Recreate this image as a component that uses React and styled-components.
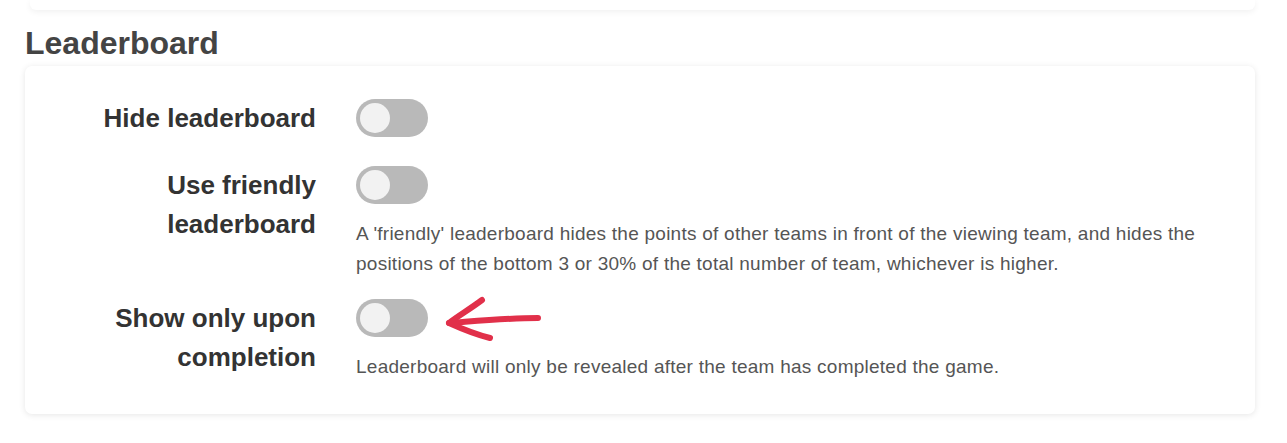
import React from "react";
import styled, { createGlobalStyle } from "styled-components";

const GlobalStyle = createGlobalStyle`
  html, body {
    margin: 0;
    padding: 0;
    background: #ffffff;
    font-family: "Liberation Sans", Arial, sans-serif;
  }
`;

const Page = styled.div`
  width: 1287px;
  height: 443px;
  overflow: hidden;
  background: #ffffff;
`;

const PrevCard = styled.div`
  margin: 0 32px 0 30px;
  height: 10px;
  background: #fff;
  border-radius: 0 0 6px 6px;
  box-shadow: 0 2px 6px rgba(0, 0, 0, 0.06);
`;

const Section = styled.section`
  padding: 0 32px 0 25px;
`;

const Heading = styled.h2`
  margin: 15px 0 5px 0;
  font-size: 32px;
  line-height: 36px;
  font-weight: bold;
  color: #444;
`;

const Card = styled.div`
  background: #fff;
  border-radius: 7px;
  box-shadow: 0 1px 6px rgba(0, 0, 0, 0.1);
  padding: 33px 0 32px 0;
`;

const Row = styled.div`
  display: grid;
  grid-template-columns: 291px 1fr;
  column-gap: 40px;
  margin-top: ${(p) => p.$gap || 0}px;
`;

const Label = styled.div`
  text-align: right;
  font-size: 26px;
  line-height: 39px;
  font-weight: bold;
  color: #333;
`;

const Control = styled.div`
  position: relative;
`;

const Toggle = styled.div`
  width: 72px;
  height: 38px;
  border-radius: 19px;
  background: #b9b9b9;
  position: relative;

  &::after {
    content: "";
    position: absolute;
    top: 4px;
    left: 4px;
    width: 30px;
    height: 30px;
    border-radius: 50%;
    background: #f2f2f2;
  }
`;

const Desc = styled.p`
  margin: 15px 0 0 0;
  max-width: 850px;
  font-size: 19px;
  letter-spacing: 0.25px;
  line-height: 30px;
  color: #555;
`;

const Arrow = styled.svg`
  position: absolute;
  left: 90px;
  top: -2px;
  width: 100px;
  height: 46px;
  overflow: visible;
`;

export default function App() {
  return (
    <Page>
      <GlobalStyle />
      <PrevCard />
      <Section>
        <Heading>Leaderboard</Heading>
        <Card>
          <Row>
            <Label>Hide leaderboard</Label>
            <Control>
              <Toggle />
            </Control>
          </Row>
          <Row $gap={28}>
            <Label>
              Use friendly
              <br />
              leaderboard
            </Label>
            <Control>
              <Toggle />
              <Desc>
                A 'friendly' leaderboard hides the points of other teams in front of the viewing
                team, and hides the positions of the bottom 3 or 30% of the total number of team,
                whichever is higher.
              </Desc>
            </Control>
          </Row>
          <Row $gap={20}>
            <Label>
              Show only upon
              <br />
              completion
            </Label>
            <Control>
              <Toggle />
              <Arrow viewBox="0 0 100 46">
                <path
                  d="M3 26 C 30 24, 60 21, 92 21"
                  fill="none"
                  stroke="#e1304a"
                  strokeWidth="6"
                  strokeLinecap="round"
                />
                <path
                  d="M36 3 C 24 12, 12 19, 3 26 C 14 31, 28 37, 44 41"
                  fill="none"
                  stroke="#e1304a"
                  strokeWidth="6"
                  strokeLinecap="round"
                  strokeLinejoin="round"
                />
              </Arrow>
              <Desc>Leaderboard will only be revealed after the team has completed the game.</Desc>
            </Control>
          </Row>
        </Card>
      </Section>
    </Page>
  );
}
